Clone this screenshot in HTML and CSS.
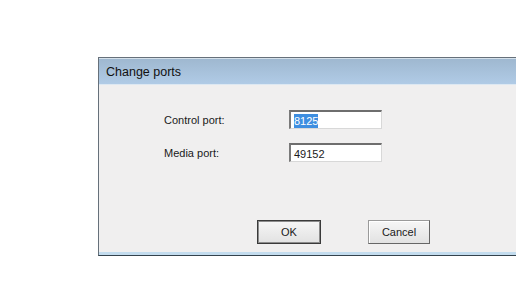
FILE: index.html
```html
<!DOCTYPE html>
<html lang="en">
<head>
    <meta charset="UTF-8">
    <title>Change ports</title>
    <link rel="stylesheet" href="styles.css">
</head>
<body>
    <div class="dialog">
        <div class="titleBar">Change ports</div>
        <div class="content">
            <div class="row">
                <span class="label">Control port:</span>
                <div class="field"><span class="selected">8125</span></div>
            </div>
            <div class="row">
                <span class="label">Media port:</span>
                <div class="field">49152</div>
            </div>
            <div class="buttons">
                <div class="button defaultButton">OK</div>
                <div class="button">Cancel</div>
            </div>
        </div>
        <div class="bottomFrame"></div>
    </div>
</body>
</html>
```

FILE: styles.css
```css
body {
    margin: 0;
    background: #fff;
    overflow: hidden;
    font-family: 'Liberation Sans', Arial, sans-serif;
    font-size: 11px;
    color: #1a1a1a;
}

.dialog {
    margin: 57px 0 0 98px;
    width: 440px;
    border: 1px solid #66707a;
    border-right: none;
    border-bottom: 1px solid #34424c;
}

.titleBar {
    height: 25px;
    line-height: 26px;
    padding-left: 7px;
    font-size: 12.5px;
    color: #111;
    background: linear-gradient(#9fb8d0, #b0cbe6);
    border-top: 1px solid #d4e0ea;
    border-bottom: 1px solid #dde8f2;
}

.content {
    height: 142px;
    padding: 25px 0 0 65px;
    background: #f0efef;
}

.row {
    display: flex;
    align-items: center;
    margin-bottom: 14px;
}

.label {
    width: 125px;
}

.field {
    box-sizing: border-box;
    width: 93px;
    height: 19px;
    padding: 3px 0 0 3px;
    background: #fff;
    border-top: 2px solid #6e6e6e;
    border-left: 2px solid #7a7a7a;
    border-right: 1px solid #d8d8d8;
    border-bottom: 1px solid #d8d8d8;
    font-size: 11px;
}

.selected {
    background: #3e8ee0;
    color: #fff;
    padding: 1px 0;
}

.buttons {
    display: flex;
    gap: 47px;
    margin: 58px 0 0 93px;
}

.button {
    box-sizing: border-box;
    width: 62px;
    height: 24px;
    line-height: 22px;
    text-align: center;
    background: linear-gradient(#f6f6f6, #e2e2e2);
    border: 1px solid #9a9a9a;
    border-right-color: #666;
    border-bottom-color: #666;
    box-shadow: inset 1px 1px 0 #fff;
}

.defaultButton {
    width: 64px;
    border: 1px solid #3a3a3a;
    box-shadow: inset 0 0 0 1px #8c8c8c;
}

.bottomFrame {
    height: 3px;
    background: #c3dcee;
}
```
